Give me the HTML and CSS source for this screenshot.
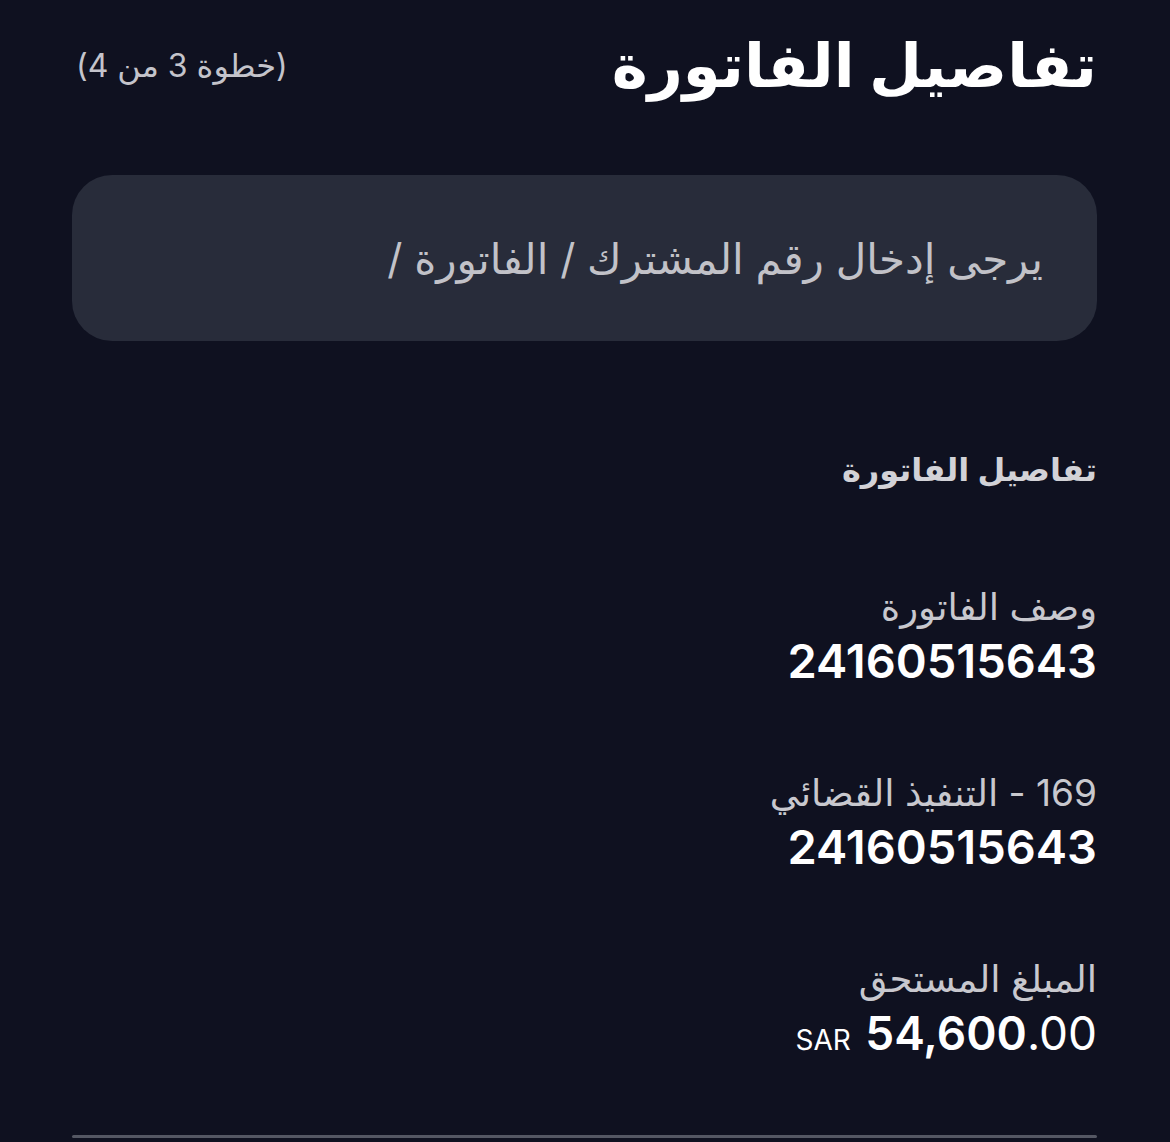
FILE: index.html
```html
<!DOCTYPE html>
<html lang="ar" dir="rtl">
<head>
<meta charset="utf-8">
<title>تفاصيل الفاتورة</title>
<link rel="stylesheet" href="styles.css">
</head>
<body>
<main class="page">
  <header class="header">
    <h1 class="title">تفاصيل الفاتورة</h1>
    <span class="step">(خطوة 3 من 4)</span>
  </header>

  <div class="input-card">
    <span class="placeholder">يرجى إدخال رقم المشترك / الفاتورة /</span>
  </div>

  <h2 class="section-title">تفاصيل الفاتورة</h2>

  <dl class="details">
    <div class="item">
      <dt class="label">وصف الفاتورة</dt>
      <dd class="value">24160515643</dd>
    </div>
    <div class="item">
      <dt class="label">169 - التنفيذ القضائي</dt>
      <dd class="value">24160515643</dd>
    </div>
    <div class="item">
      <dt class="label">المبلغ المستحق</dt>
      <dd class="value amount"><span class="currency">SAR</span> <span class="num">54,600</span><span class="dec">.00</span></dd>
    </div>
  </dl>

  <div class="divider"></div>
</main>
</body>
</html>
```

FILE: styles.css
```css
html, body {
  margin: 0;
  padding: 0;
  background: #0f1120;
}
body {
  font-family: "Inter", "DejaVu Sans", "Noto Sans", sans-serif;
  color: #ffffff;
  height: 1142px;
  overflow: hidden;
}
.page {
  padding: 0 73px 0 72px;
}
.header {
  display: flex;
  justify-content: space-between;
  align-items: center;
  height: 130px;
}
.title {
  margin: 0;
  font-size: 61px;
  font-weight: 700;
  color: #ffffff;
  line-height: 1;
}
.step {
  font-size: 32px;
  color: #c4c4cb;
  margin-left: 4px;
}
.input-card {
  margin-top: 45px;
  height: 166px;
  background: #282c3a;
  border-radius: 40px;
  display: flex;
  align-items: center;
  padding: 0 54px;
  box-sizing: border-box;
}
.placeholder {
  font-size: 42px;
  color: #c2c2c8;
}
.section-title {
  margin: 104px 0 0;
  font-size: 32px;
  font-weight: 600;
  color: #d2d2d7;
  line-height: 50px;
}
.details {
  margin: 88px 0 0;
  display: flex;
  flex-direction: column;
  gap: 80px;
}
.item {
  display: flex;
  flex-direction: column;
}
.label {
  font-size: 37px;
  color: #c8c8ce;
  line-height: 48px;
}
.value {
  margin: 2px 0 0;
  font-size: 47px;
  font-weight: 600;
  line-height: 56px;
  color: #ffffff;
  direction: ltr;
  text-align: right;
}
.value.amount {
  font-size: 46px;
}
.amount .currency {
  font-size: 28px;
  font-weight: 400;
  margin-right: 3px;
}
.amount .dec {
  font-weight: 400;
}
.divider {
  margin-top: 67px;
  height: 3px;
  background: #545763;
  border-radius: 2px;
}
```
